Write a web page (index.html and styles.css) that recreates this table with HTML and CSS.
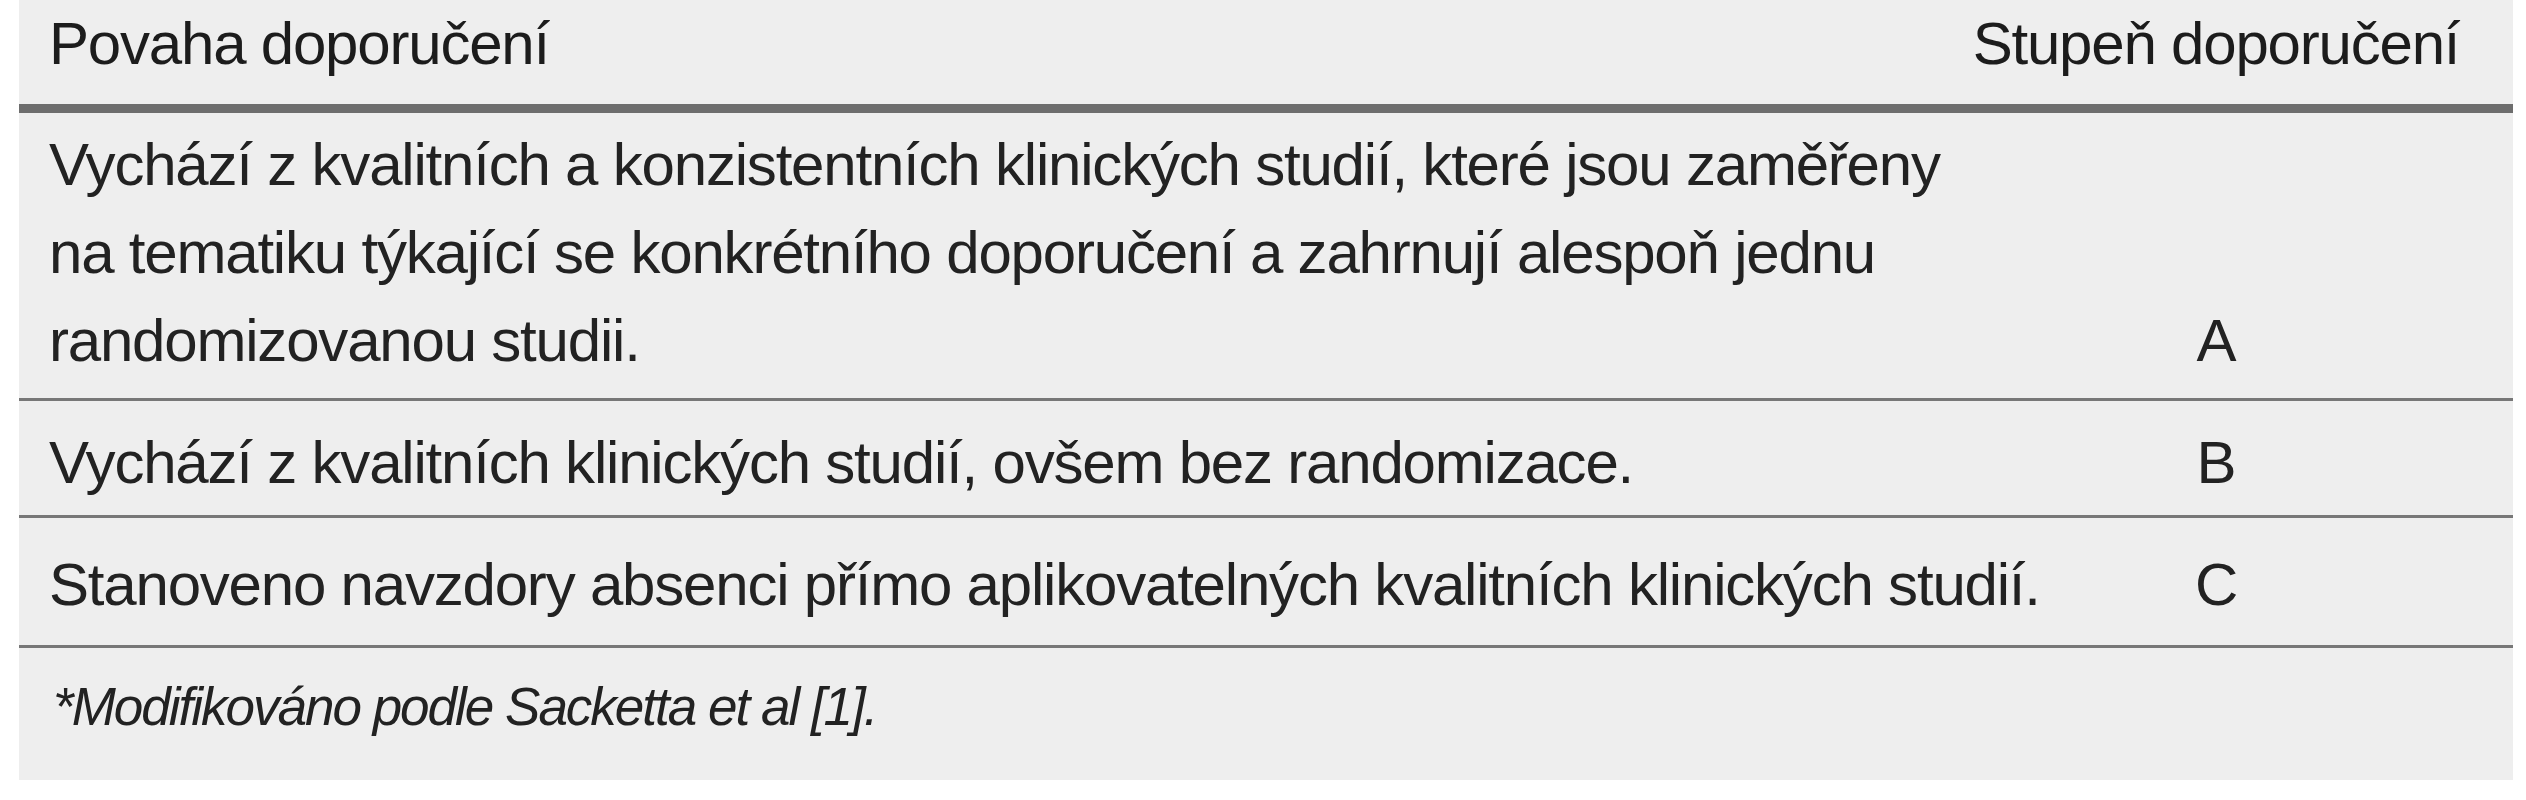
FILE: index.html
```html
<!DOCTYPE html>
<html lang="cs">
<head>
<meta charset="utf-8">
<title>Stupně doporučení</title>
<link rel="stylesheet" href="styles.css">
</head>
<body>
<div class="table">
  <div class="row head">
    <div class="c1">Povaha doporučení</div>
    <div class="c2">Stupeň doporučení</div>
  </div>
  <div class="row r-a">
    <div class="c1">Vychází z kvalitních a konzistentních klinických studií, které jsou zaměřeny<br>na tematiku týkající se konkrétního doporučení a zahrnují alespoň jednu<br>randomizovanou studii.</div>
    <div class="c2 last">A</div>
  </div>
  <div class="row r-b">
    <div class="c1">Vychází z kvalitních klinických studií, ovšem bez randomizace.</div>
    <div class="c2">B</div>
  </div>
  <div class="row r-c">
    <div class="c1">Stanoveno navzdory absenci přímo aplikovatelných kvalitních klinických studií.</div>
    <div class="c2">C</div>
  </div>
  <div class="note">*Modifikováno podle Sacketta et al [1].</div>
</div>
</body>
</html>
```

FILE: styles.css
```css
body {
  margin: 0;
  background: #ffffff;
}

.table {
  margin-left: 19px;
  width: 2494px;
  background: #eeeeee;
  font-family: "Liberation Sans", Arial, sans-serif;
  font-size: 60px;
  letter-spacing: -1.2px;
  line-height: 88px;
  color: #222222;
}

.row {
  display: grid;
  grid-template-columns: minmax(0, 1fr) 594px;
}

.c1 {
  padding-left: 30px;
  white-space: nowrap;
}

.c2 {
  display: flex;
  justify-content: center;
  white-space: nowrap;
}

.c2.last {
  align-self: end;
}

.head {
  padding-bottom: 16px;
  border-bottom: 9px solid #6d6d6d;
  color: #1c1c1c;
}

.r-a {
  padding: 8px 0 13px;
  border-bottom: 3px solid #777777;
}

.r-b {
  padding: 18px 0 8px;
  border-bottom: 3px solid #777777;
}

.r-c {
  padding: 23px 0 16px;
  border-bottom: 3px solid #777777;
}

.note {
  padding: 15px 0 29px 34px;
  font-size: 53px;
  font-style: italic;
  letter-spacing: -2px;
  white-space: nowrap;
}
```
